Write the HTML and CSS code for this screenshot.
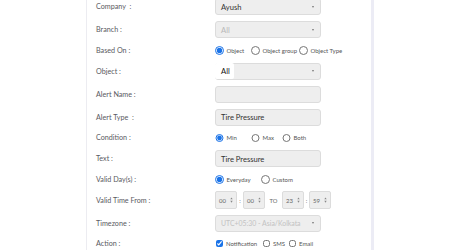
FILE: index.html
```html
<!DOCTYPE html>
<html lang="en">
<head>
    <meta charset="UTF-8">
    <title>Add Alert</title>
    <link rel="stylesheet" href="styles.css">
</head>
<body>
    <div class="panel">
        <div class="form">
            <div class="row box-row">
                <span class="lbl">Company &nbsp;:</span>
                <div class="select"><span class="val">Ayush</span><i class="caret"></i></div>
            </div>
            <div class="row box-row">
                <span class="lbl">Branch :</span>
                <div class="select disabled"><span class="val">All</span><i class="caret"></i></div>
            </div>
            <div class="row choice-row">
                <span class="lbl">Based On :</span>
                <div class="choices based">
                    <label class="opt"><input type="radio" name="based" checked> Object</label>
                    <label class="opt"><input type="radio" name="based"> Object group</label>
                    <label class="opt"><input type="radio" name="based"> Object Type</label>
                </div>
            </div>
            <div class="row box-row">
                <span class="lbl">Object :</span>
                <div class="select"><span class="val picked">All</span><i class="caret"></i></div>
            </div>
            <div class="row box-row">
                <span class="lbl">Alert Name :</span>
                <div class="field"></div>
            </div>
            <div class="row box-row">
                <span class="lbl">Alert Type &nbsp;:</span>
                <div class="field">Tire Pressure</div>
            </div>
            <div class="row choice-row">
                <span class="lbl">Condition :</span>
                <div class="choices cond">
                    <label class="opt"><input type="radio" name="cond" checked> Min</label>
                    <label class="opt"><input type="radio" name="cond"> Max</label>
                    <label class="opt"><input type="radio" name="cond"> Both</label>
                </div>
            </div>
            <div class="row box-row">
                <span class="lbl">Text :</span>
                <div class="field">Tire Pressure</div>
            </div>
            <div class="row choice-row">
                <span class="lbl">Valid Day(s) :</span>
                <div class="choices days">
                    <label class="opt"><input type="radio" name="days" checked> Everyday</label>
                    <label class="opt"><input type="radio" name="days"> Custom</label>
                </div>
            </div>
            <div class="row box-row">
                <span class="lbl">Valid Time From :</span>
                <div class="times">
                    <div class="spin">00<svg viewBox="0 0 4 8"><path d="M2 0.5 L3.6 3 L0.4 3 Z M2 7.5 L3.6 5 L0.4 5 Z"/></svg></div>
                    <span class="sep">:</span>
                    <div class="spin">00<svg viewBox="0 0 4 8"><path d="M2 0.5 L3.6 3 L0.4 3 Z M2 7.5 L3.6 5 L0.4 5 Z"/></svg></div>
                    <span class="to">TO</span>
                    <div class="spin">23<svg viewBox="0 0 4 8"><path d="M2 0.5 L3.6 3 L0.4 3 Z M2 7.5 L3.6 5 L0.4 5 Z"/></svg></div>
                    <span class="sep narrow">:</span>
                    <div class="spin">59<svg viewBox="0 0 4 8"><path d="M2 0.5 L3.6 3 L0.4 3 Z M2 7.5 L3.6 5 L0.4 5 Z"/></svg></div>
                </div>
            </div>
            <div class="row box-row">
                <span class="lbl">Timezone :</span>
                <div class="select disabled tz"><span class="val">UTC+05:30 - Asia/Kolkata</span><i class="caret"></i></div>
            </div>
            <div class="row choice-row">
                <span class="lbl">Action :</span>
                <div class="choices checks">
                    <label class="opt"><input type="checkbox" checked> Notification</label>
                    <label class="opt"><input type="checkbox"> SMS</label>
                    <label class="opt"><input type="checkbox"> Email</label>
                </div>
            </div>
        </div>
    </div>
</body>
</html>
```

FILE: styles.css
```css
:root {
    --label-color: #5a5a62;
    --box-bg: #eeeeee;
    --box-border: #dcdcdc;
    --accent: #1a73e8;
}

body {
    margin: 0;
    background: #ffffff;
    font-family: 'Lato', 'Open Sans', sans-serif;
    overflow: hidden;
}

.panel {
    margin: -5px 0 0 86px;
    width: 284px;
    height: 270px;
    background: #ffffff;
    border-left: 1px solid #ececf1;
    border-right: 3px solid #ececf5;
}

.form {
    padding-left: 9px;
}

.row {
    display: flex;
    align-items: center;
}

.box-row {
    height: 23px;
}

.choice-row {
    height: 18.5px;
}

.lbl {
    width: 119px;
    flex-shrink: 0;
    font-size: 7.2px;
    color: var(--label-color);
    white-space: pre;
}

/* selects and inputs */
.select,
.field {
    box-sizing: border-box;
    width: 106px;
    height: 17px;
    background: var(--box-bg);
    border: 1px solid var(--box-border);
    border-radius: 3px;
    display: flex;
    align-items: center;
    font-size: 7.6px;
    color: #333;
    padding-left: 5px;
}

.select .val.picked {
    background: #ffffff;
    margin-left: -6px;
    padding: 3px 4px 3px 6px;
    border-radius: 2px;
    color: #111;
}

.select.disabled {
    color: #b8b8b8;
}

.select.tz .val {
    font-size: 6.9px;
    color: #c2c2c2;
}

.caret {
    width: 0;
    height: 0;
    margin-left: auto;
    margin-right: 6px;
    border-left: 1.6px solid transparent;
    border-right: 1.6px solid transparent;
    border-top: 2.4px solid #777;
}

/* radios and checkboxes */
.choices {
    display: flex;
    align-items: center;
}

.opt {
    display: flex;
    align-items: center;
    gap: 3px;
    font-size: 6px;
    color: #555;
    white-space: nowrap;
}

.opt input {
    margin: 0;
    width: 8.5px;
    height: 8.5px;
    accent-color: var(--accent);
}

.based .opt:nth-child(1) { width: 36px; }
.based .opt:nth-child(2) { width: 48px; }

.cond .opt:nth-child(1) { width: 36px; }
.cond .opt:nth-child(2) { width: 31px; }

.days .opt:nth-child(1) { width: 46px; }

.checks .opt input {
    width: 7px;
    height: 7px;
    margin-left: 1px;
}

.checks .opt:nth-child(1) { width: 47px; }
.checks .opt:nth-child(2) { width: 26px; }

/* time spinners */
.times {
    display: flex;
    align-items: center;
}

.spin {
    box-sizing: border-box;
    width: 22px;
    height: 18px;
    background: var(--box-bg);
    border: 1px solid var(--box-border);
    border-radius: 2px;
    display: flex;
    align-items: center;
    justify-content: space-between;
    padding: 0 3px 0 3px;
    font-size: 6px;
    color: #666;
}

.spin svg {
    width: 3px;
    height: 6px;
    fill: #888;
}

.sep {
    width: 6px;
    text-align: center;
    font-size: 6px;
    color: #666;
}

.sep.narrow {
    width: 5px;
}

.to {
    width: 17px;
    text-align: center;
    font-size: 5.8px;
    color: #666;
}
```
